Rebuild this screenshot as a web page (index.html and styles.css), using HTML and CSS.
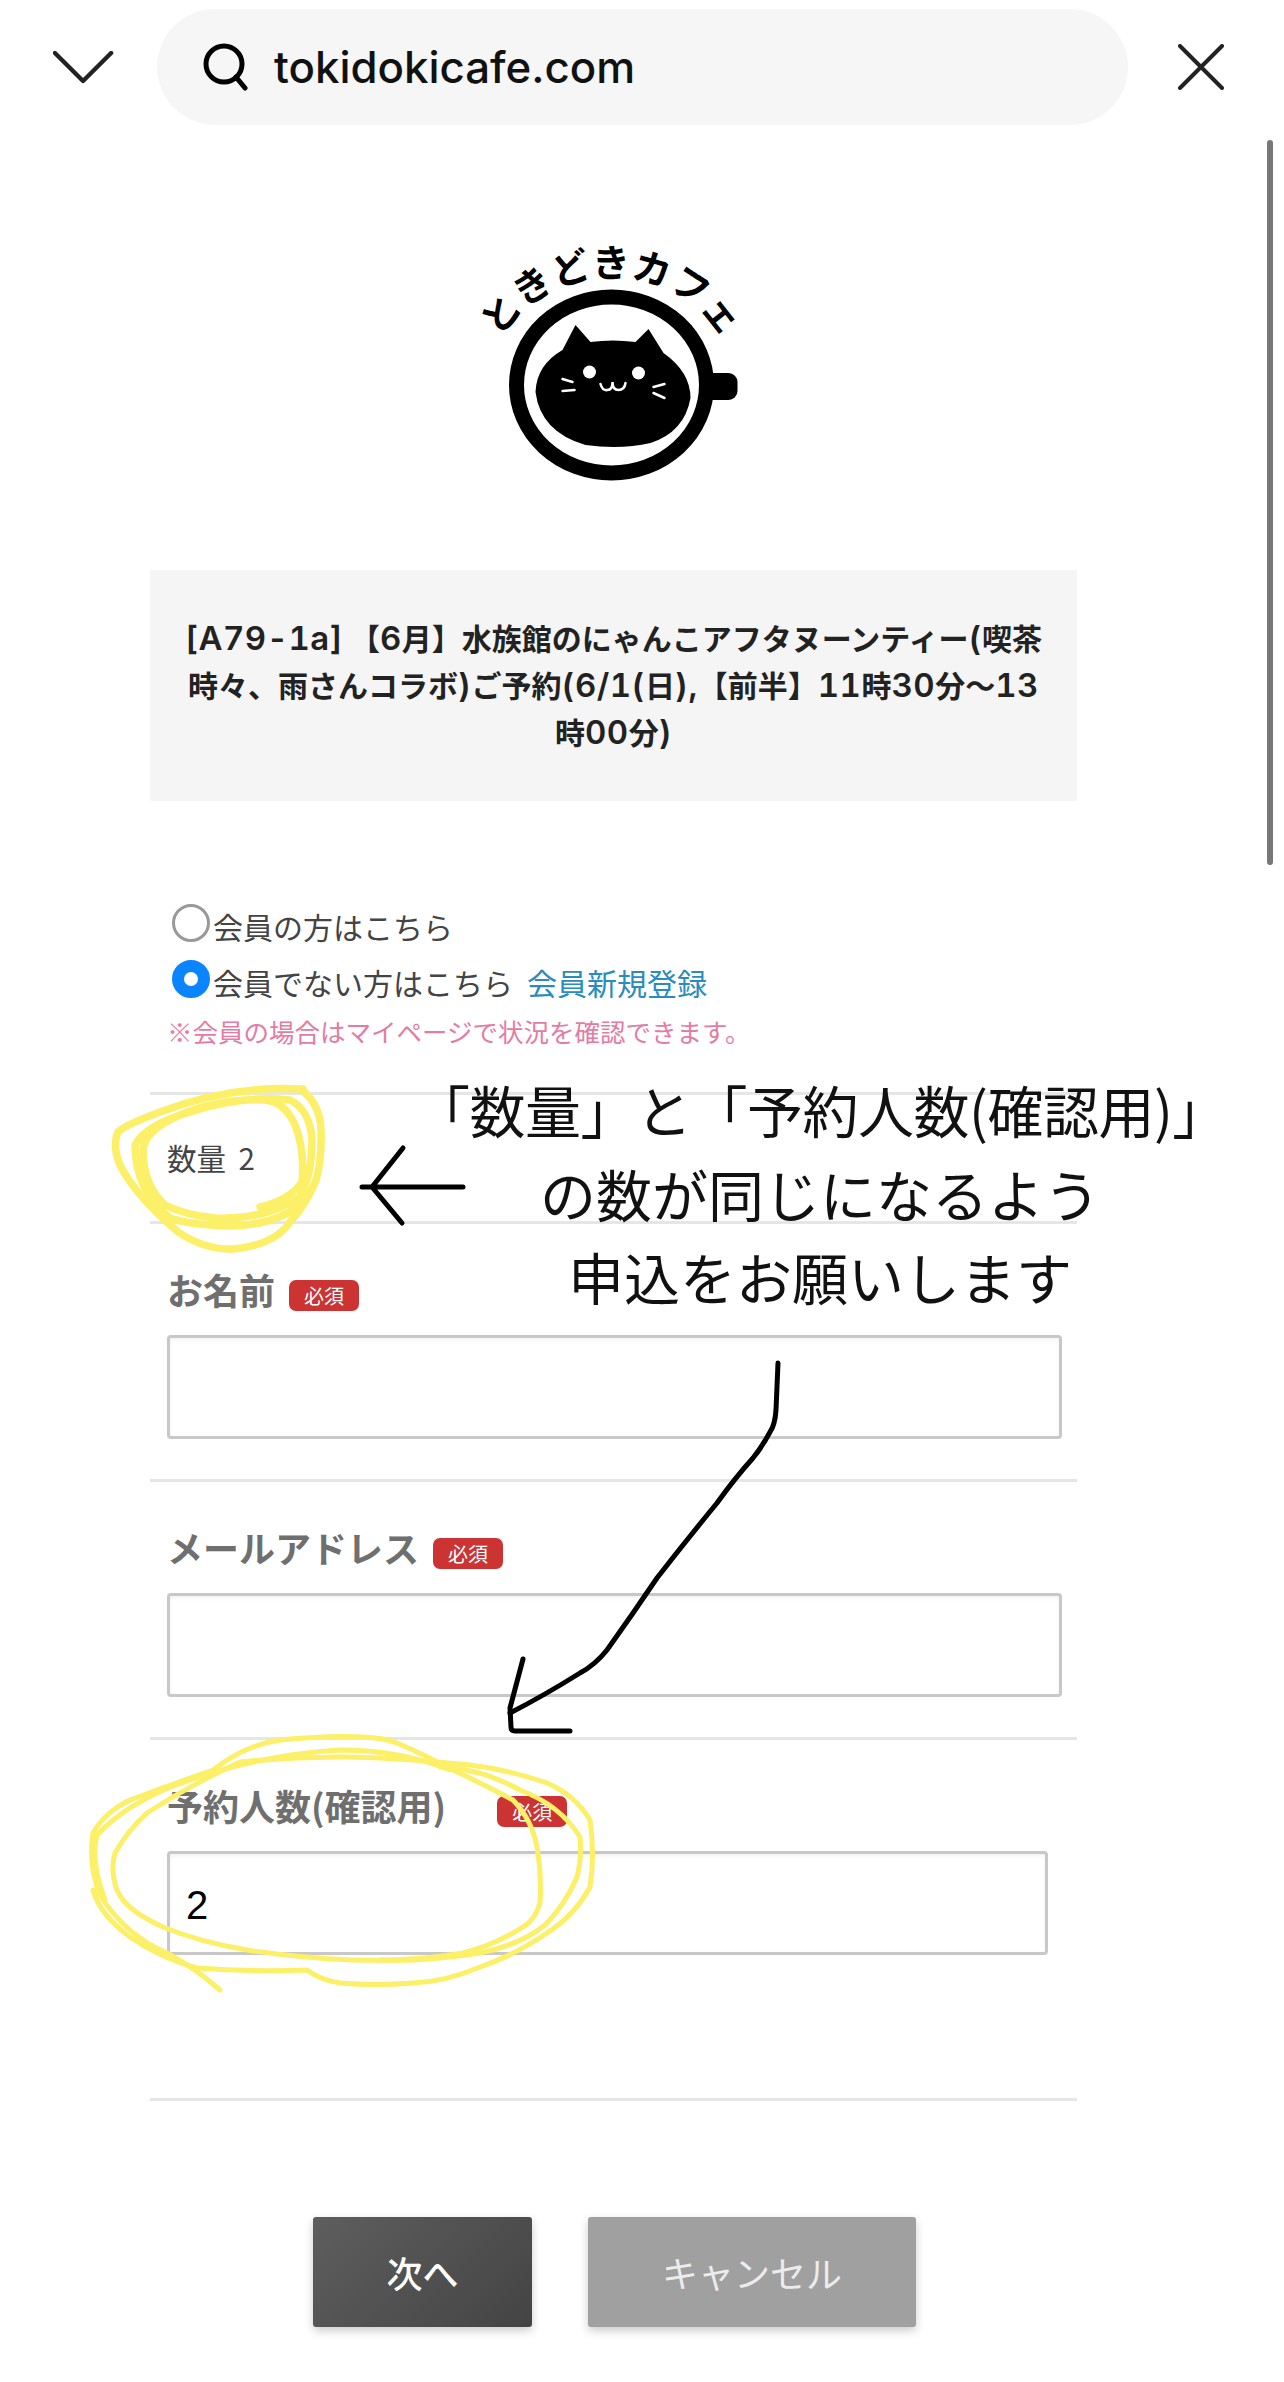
FILE: index.html
```html
<!DOCTYPE html>
<html lang="ja">
<head>
  <meta charset="UTF-8">
  <title>tokidokicafe.com</title>
  <link rel="stylesheet" href="styles.css">
</head>
<body>
  <!-- Browser bar -->
  <header class="topbar">
    <svg class="icon-chevron" viewBox="0 0 64 34"><path d="M2 2 L31 31 L60 2"/></svg>
    <div class="search-pill">
      <svg class="icon-search" viewBox="0 0 46 48"><circle cx="21" cy="21" r="18"/><path d="M33 34 L42 45"/></svg>
      <span class="search-url">tokidokicafe.com</span>
    </div>
    <svg class="icon-close" viewBox="0 0 46 46"><path d="M2 2 L44 44 M44 2 L2 44"/></svg>
  </header>

  <main class="content">
    <!-- Logo -->
    <svg class="logo" viewBox="483.5 245 260 240">
      <path id="logo-arc" class="logo-guide" d="M489 385 A122 108 0 0 1 733 385"/>
      <text class="logo-text"><textPath href="#logo-arc" startOffset="50%" text-anchor="middle">ときどきカフェ</textPath></text>
      <rect x="695" y="373" width="42" height="27" rx="9"/>
      <ellipse class="logo-ring" cx="611" cy="385" rx="95" ry="88"/>
      <path d="M575 325 L590 342 Q612 339 635 342 L648 329 L663 353 Q690 372 690 398 Q684 432 650 443 Q620 450 585 445 Q540 432 535 392 Q536 365 562 350 Z"/>
      <circle class="logo-white" cx="589" cy="372" r="6.5"/>
      <circle class="logo-white" cx="638" cy="373" r="6.5"/>
      <path class="logo-face" d="M600 384 Q602 391 607 390 Q612 390 612 382 Q612 390 618 390 Q624 390 625 383 M562 379 L572 382 M562 391 L574 390 M653 387 L664 384 M653 393 L664 398"/>
    </svg>

    <div class="title-box"><span class="ltn">[A79-1a]</span> 【<span class="ltn">6</span>月】水族館のにゃんこアフタヌーンティー<span class="ltn">(</span>喫茶<br>時々、雨さんコラボ<span class="ltn">)</span>ご予約<span class="ltn">(6/1(</span>日<span class="ltn">),</span>【前半】<span class="ltn">11</span>時<span class="ltn">30</span>分〜<span class="ltn">13</span><br>時<span class="ltn">00</span>分<span class="ltn">)</span></div>

    <!-- Member choice -->
    <section class="member-block">
      <label class="radio-row"><input type="radio" name="member"><span>会員の方はこちら</span></label>
      <label class="radio-row"><input type="radio" name="member" checked><span>会員でない方はこちら</span><a class="signup-link" href="#">会員新規登録</a></label>
      <p class="member-note">※会員の場合はマイページで状況を確認できます。</p>
    </section>

    <section class="qty-row">数量 2</section>

    <section class="field">
      <div class="field-label">お名前<span class="badge">必須</span></div>
      <input class="text-input" type="text">
    </section>

    <section class="field">
      <div class="field-label">メールアドレス<span class="badge">必須</span></div>
      <input class="text-input" type="email">
    </section>

    <section class="field field-last">
      <div class="field-label">予約人数(確認用)<span class="badge badge-far">必須</span></div>
      <input class="text-input text-input-short" type="text" value="2">
    </section>

    <div class="actions">
      <button class="btn btn-next">次へ</button>
      <button class="btn btn-cancel">キャンセル</button>
    </div>
  </main>

  <div class="scrollbar"></div>

  <!-- Hand drawn notes on top of the screenshot -->
  <svg class="scribbles" viewBox="0 0 1284 2382">
    <g class="marker marker-thick">
      <path d="M303 1091 Q320 1105 321 1130 Q322 1160 316 1180 Q306 1205 290 1222 Q275 1245 233 1249 Q205 1250 178 1232 Q135 1195 120 1165 Q112 1145 118 1132 Q125 1125 160 1112 Q230 1085 303 1089"/>
      <path d="M260 1207 Q290 1200 302 1182 Q305 1150 295 1125 Q285 1102 265 1100 Q220 1098 180 1115 Q145 1130 143 1150 Q143 1185 165 1205 Q185 1215 215 1218 Q265 1220 300 1197 Q312 1175 312 1140 Q310 1110 290 1100 Q240 1095 190 1112 Q145 1125 135 1145 Q135 1190 170 1218 Q190 1225 230 1226 Q275 1225 300 1205"/>
    </g>
    <g class="marker">
      <path d="M220 1990 Q195 1968 167 1953 Q125 1935 100 1895 Q88 1865 93 1833 Q105 1812 130 1800 Q170 1785 213 1770 Q245 1745 280 1740 Q330 1735 363 1737 Q385 1738 397 1743 Q425 1755 447 1767 Q485 1785 513 1800 Q532 1820 537 1847 Q542 1875 540 1903 Q535 1920 523 1927 Q495 1945 463 1953 Q410 1962 353 1960 Q300 1958 247 1950 Q200 1942 163 1927 Q125 1910 117 1890 Q110 1870 115 1853 Q128 1830 147 1813 Q190 1785 240 1762 Q310 1755 380 1758 Q425 1760 470 1765 Q510 1770 547 1783 Q575 1795 590 1820 Q595 1855 590 1887 Q575 1915 547 1933 Q515 1955 480 1967 Q445 1982 413 1983 Q375 1986 340 1983 Q320 1980 307 1970 Q250 1972 197 1968 Q160 1958 130 1937 Q100 1915 93 1890"/>
      <path d="M580 1837 Q582 1858 577 1877 Q565 1905 545 1925 Q520 1945 480 1953 Q420 1962 380 1960 M440 1767 Q480 1768 520 1790 Q560 1805 580 1837"/>
      <path d="M105 1900 Q90 1860 97 1835 Q130 1800 190 1780 Q260 1755 340 1750 Q400 1750 450 1770"/>
    </g>
    <g class="pen">
      <path d="M362 1187 L463 1187 M403 1148 L372 1187 L402 1223"/>
      <path d="M778 1363 L776 1410 Q775 1425 770 1432 Q762 1447 753 1458 Q735 1478 717 1503 Q685 1542 657 1578 Q632 1615 607 1650 Q595 1665 580 1673 Q545 1695 510 1713"/>
      <path d="M523 1659 L510 1708 L511 1727 Q511 1731 515 1731 L570 1731"/>
    </g>
  </svg>
  <div class="note-text">
    <div class="note-first">「数量」と「予約人数(確認用)」</div>
    <div>の数が同じになるよう</div>
    <div>申込をお願いします</div>
  </div>
</body>
</html>
```

FILE: styles.css
```css
* {
  margin: 0;
  padding: 0;
  box-sizing: border-box;
}

body {
  position: relative;
  width: 1284px;
  height: 2382px;
  overflow: hidden;
  background: #fff;
  font-family: "Liberation Sans", "Noto Sans CJK JP", sans-serif;
  color: #444;
}

/* Browser bar */
.topbar {
  display: flex;
  align-items: center;
  height: 134px;
  padding: 9px 0 9px 53px;
}

.icon-chevron {
  width: 62px;
  height: 33px;
  fill: none;
  stroke: #222;
  stroke-width: 4.5;
  stroke-linecap: round;
  stroke-linejoin: round;
}

.search-pill {
  display: flex;
  align-items: center;
  width: 971px;
  height: 116px;
  margin-left: 42px;
  padding-left: 46px;
  background: #f6f6f6;
  border-radius: 58px;
}

.icon-search {
  width: 46px;
  height: 48px;
  fill: none;
  stroke: #000;
  stroke-width: 5;
  stroke-linecap: round;
}

.search-url {
  margin-left: 25px;
  font-family: Inter, "Liberation Sans", sans-serif;
  font-size: 43.8px;
  font-weight: 500;
  color: #111;
}

.icon-close {
  width: 46px;
  height: 46px;
  margin-left: 50px;
  fill: none;
  stroke: #222;
  stroke-width: 4;
  stroke-linecap: round;
}

.content {
  width: 927px;
  margin-left: 150px;
}

/* Logo */
.logo {
  display: block;
  width: 260px;
  height: 240px;
  margin: 111px auto 0;
  overflow: visible;
}

.logo-guide {
  fill: none;
}

.logo-text {
  font-family: "Noto Sans CJK JP", sans-serif;
  font-size: 38px;
  font-weight: 700;
  fill: #000;
}

.logo-ring {
  fill: #fff;
  stroke: #000;
  stroke-width: 15;
}

.logo-white {
  fill: #fff;
}

.logo-face {
  fill: none;
  stroke: #fff;
  stroke-width: 2.5;
  stroke-linecap: round;
}

.title-box {
  height: 231px;
  margin-top: 85px;
  padding: 44px 0 0;
  background: #f5f5f5;
  font-family: "Noto Sans CJK JP", sans-serif;
  font-size: 30px;
  font-weight: 700;
  line-height: 46px;
  text-align: center;
  color: #222;
  white-space: nowrap;
}

.ltn {
  font-family: Inter, sans-serif;
  font-size: 33px;
  font-weight: 600;
  font-variant-numeric: tabular-nums;
  letter-spacing: 0.5px;
}

/* Member choice */
.member-block {
  height: 294px;
  padding: 97px 0 0 17px;
  border-bottom: 3px solid #e6e6e6;
  font-family: "Noto Sans CJK JP", sans-serif;
}

.radio-row {
  display: flex;
  align-items: center;
  height: 56px;
  font-size: 30px;
}

.radio-row input {
  appearance: none;
  width: 38px;
  height: 38px;
  margin: -6px 0 0 5px;
  border: 3px solid #999;
  border-radius: 50%;
  background: #fff;
}

.radio-row input:checked {
  border: 12px solid #0a84ff;
}

.radio-row span {
  margin-left: 3px;
}

.signup-link {
  margin-left: 14px;
  color: #2a8cbc;
  text-decoration: none;
}

.member-note {
  margin-top: 3px;
  font-size: 25.5px;
  line-height: 36px;
  color: #e47ba3;
}

.qty-row {
  height: 129px;
  padding: 41px 0 0 17px;
  border-bottom: 3px solid #e6e6e6;
  font-family: "Noto Sans CJK JP", sans-serif;
  font-size: 29.5px;
  line-height: 42px;
  word-spacing: 6px;
}

/* Form fields */
.field {
  height: 258px;
  padding: 40px 0 0 17px;
  border-bottom: 3px solid #e6e6e6;
}

.field-last {
  height: 361px;
}

.field-label {
  display: flex;
  align-items: center;
  height: 50px;
  font-family: "Noto Sans CJK JP", sans-serif;
  font-size: 36px;
  font-weight: 700;
  color: #6f6f6f;
}

.badge {
  display: block;
  width: 70px;
  height: 31px;
  margin: 13px 0 0 14px;
  background: #cc3333;
  border-radius: 7px;
  font-size: 20px;
  font-weight: 400;
  line-height: 31px;
  text-align: center;
  color: #fff;
}

.badge-far {
  margin-left: 51px;
}

.text-input {
  display: block;
  width: 895px;
  height: 104px;
  margin-top: 21px;
  padding: 4px 16px 0;
  background: #fff;
  border: 3px solid #c8c8c8;
  border-radius: 4px;
  box-shadow: inset 0 2px 4px rgba(0, 0, 0, 0.05);
  font-family: "Liberation Sans", sans-serif;
  font-size: 40px;
  color: #000;
}

.text-input-short {
  width: 881px;
}

/* Buttons */
.actions {
  display: flex;
  gap: 56px;
  margin: 116px 0 0 163px;
}

.btn {
  height: 110px;
  border: none;
  border-radius: 3px;
  box-shadow: 0 4px 10px rgba(0, 0, 0, 0.2);
  font-family: "Noto Sans CJK JP", sans-serif;
  font-size: 36px;
  color: #fff;
}

.btn-next {
  width: 219px;
  font-weight: 500;
  background: linear-gradient(135deg, #5e5e5e, #444);
}

.btn-cancel {
  width: 328px;
  background: #a0a0a0;
  color: #ececec;
}

.scrollbar {
  position: absolute;
  top: 140px;
  left: 1267px;
  width: 6px;
  height: 725px;
  background: #777;
  border-radius: 3px;
}

/* Annotations */
.scribbles {
  position: absolute;
  top: 0;
  left: 0;
  width: 1284px;
  height: 2382px;
  pointer-events: none;
}

.scribbles path {
  fill: none;
  stroke-linecap: round;
  stroke-linejoin: round;
}

.marker path {
  stroke: #fbf067;
  stroke-width: 5;
}

.marker-thick path {
  stroke-width: 7.5;
}

.pen path {
  stroke: #000;
  stroke-width: 5;
}

.note-text {
  position: absolute;
  top: 1067px;
  left: 420px;
  width: 800px;
  font-family: "Noto Sans CJK JP", sans-serif;
  font-size: 56px;
  line-height: 83.5px;
  text-align: center;
  color: #111;
  white-space: nowrap;
}

.note-first {
  margin-left: -6px;
  letter-spacing: -0.5px;
}
```
